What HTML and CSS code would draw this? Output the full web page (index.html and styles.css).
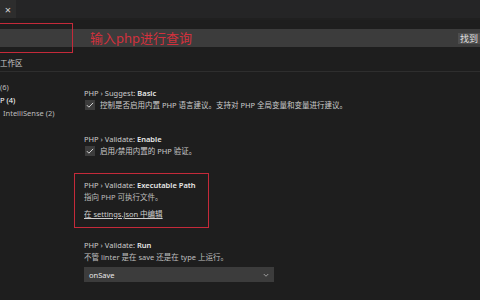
FILE: index.html
```html
<!DOCTYPE html>
<html lang="zh-CN">
<head>
    <meta charset="UTF-8">
    <title>设置 - PHP</title>
    <link rel="stylesheet" href="styles.css">
</head>
<body>
    <div class="window">
        <!-- Editor tab strip -->
        <div class="tabbar">
            <div class="tab"><span class="tab-close">×</span></div>
        </div>

        <!-- Settings search -->
        <div class="search">
            <div class="search-box">
                <span class="search-count">找到</span>
            </div>
            <div class="note-box search-note"></div>
            <span class="note-text">输入php进行查询</span>
        </div>

        <div class="scope">
            <span class="scope-tab">工作区</span>
        </div>

        <div class="content">
            <!-- Table of contents -->
            <nav class="toc">
                <div class="toc-item">(6)</div>
                <div class="toc-item active">P (4)</div>
                <div class="toc-item nested">IntelliSense (2)</div>
            </nav>

            <!-- Setting list -->
            <main class="settings">
                <section class="setting">
                    <div class="setting-title">PHP › Suggest: <b>Basic</b></div>
                    <label class="setting-check">
                        <span class="checkbox">
                            <svg viewBox="0 0 16 16" width="10" height="10"><path d="M3 8.2l3.2 3.3L13 4.6" fill="none" stroke="#d4d4d4" stroke-width="1.6"/></svg>
                        </span>
                        控制是否启用内置 PHP 语言建议。支持对 PHP 全局变量和变量进行建议。
                    </label>
                </section>

                <section class="setting">
                    <div class="setting-title">PHP › Validate: <b>Enable</b></div>
                    <label class="setting-check">
                        <span class="checkbox">
                            <svg viewBox="0 0 16 16" width="10" height="10"><path d="M3 8.2l3.2 3.3L13 4.6" fill="none" stroke="#d4d4d4" stroke-width="1.6"/></svg>
                        </span>
                        启用/禁用内置的 PHP 验证。
                    </label>
                </section>

                <section class="setting marked">
                    <div class="setting-title">PHP › Validate: <b>Executable Path</b></div>
                    <div class="setting-desc">指向 PHP 可执行文件。</div>
                    <a class="setting-link" href="#">在 settings.json 中编辑</a>
                    <div class="note-box path-note"></div>
                </section>

                <section class="setting">
                    <div class="setting-title">PHP › Validate: <b>Run</b></div>
                    <div class="setting-desc">不管 linter 是在 save 还是在 type 上运行。</div>
                    <div class="select">
                        <span>onSave</span>
                        <svg viewBox="0 0 16 16" width="8" height="8"><path d="M3.5 6l4.5 4.5L12.5 6" fill="none" stroke="#c5c5c5" stroke-width="1.4"/></svg>
                    </div>
                </section>
            </main>
        </div>
    </div>
</body>
</html>
```

FILE: styles.css
```css
:root {
    --editor-bg: #1e1e1e;
    --tabbar-bg: #252526;
    --input-bg: #3c3c3c;
    --text: #cccccc;
    --text-strong: #e8e8e8;
    --note-red: #c52a3a;
}

body {
    margin: 0;
    background-color: var(--editor-bg);
    color: var(--text);
    font-family: "Noto Sans", "Noto Sans CJK SC", sans-serif;
}

.window {
    width: 480px;
    height: 300px;
    overflow: hidden;
}

.tabbar {
    height: 18px;
    background-color: var(--tabbar-bg);
    border-bottom: 2px solid #202020;
    display: flex;
}

.tab {
    width: 16px;
    background-color: #2d2d2d;
    display: flex;
    align-items: center;
    justify-content: center;
}

.tab-close {
    font-size: 11px;
    line-height: 1;
    color: #d0d0d0;
}

.search {
    position: relative;
    padding: 9px 0 7px;
}

.search-box {
    height: 18px;
    background-color: var(--input-bg);
    display: flex;
    align-items: center;
    justify-content: flex-end;
    overflow: hidden;
}

.search-count {
    background-color: #4d4d4d;
    color: #e0e0e0;
    font-size: 9px;
    line-height: 11px;
    padding: 0 6px 0 2px;
    margin-right: -4px;
}

.note-box {
    position: absolute;
    border: 1.5px solid var(--note-red);
    pointer-events: none;
}

.search-note {
    left: -2px;
    top: 3px;
    width: 73px;
    height: 28px;
}

.note-text {
    position: absolute;
    left: 90px;
    top: 9px;
    font-size: 13px;
    line-height: 18px;
    color: #d3313d;
}

.scope {
    height: 17px;
    border-bottom: 1px solid #2e2e2e;
    display: flex;
    align-items: center;
}

.scope-tab {
    font-size: 7.5px;
    color: var(--text);
}

.content {
    display: flex;
}

.toc {
    width: 84px;
    flex-shrink: 0;
    padding-top: 9px;
    font-size: 7.5px;
    line-height: 13px;
}

.toc-item {
    color: #bdbdbd;
    white-space: nowrap;
}

.toc-item.active {
    color: #ffffff;
}

.toc-item.nested {
    padding-left: 3px;
}

.settings {
    flex: 1;
    padding-top: 15px;
    font-size: 7.5px;
    line-height: 12px;
}

.setting {
    position: relative;
    margin-bottom: 22px;
}

.setting.marked {
    margin-bottom: 19px;
}

.setting-title {
    color: var(--text);
}

.setting-title b {
    color: var(--text-strong);
    font-weight: 600;
}

.setting-check {
    display: flex;
    align-items: center;
    gap: 5px;
}

.checkbox {
    width: 10px;
    height: 10px;
    background-color: var(--input-bg);
    display: flex;
    align-items: center;
    justify-content: center;
    margin-left: 1px;
}

.setting-desc {
    color: #bfbfbf;
}

.setting-link {
    display: inline-block;
    margin-top: 5px;
    color: #cfcfcf;
    text-decoration: underline;
}

.path-note {
    left: -10px;
    top: -6px;
    width: 133px;
    height: 53px;
}

.select {
    width: 181px;
    height: 15px;
    margin-top: 4px;
    padding: 0 4px 0 5px;
    background-color: var(--input-bg);
    display: flex;
    align-items: center;
    justify-content: space-between;
    color: var(--text-strong);
}
```
